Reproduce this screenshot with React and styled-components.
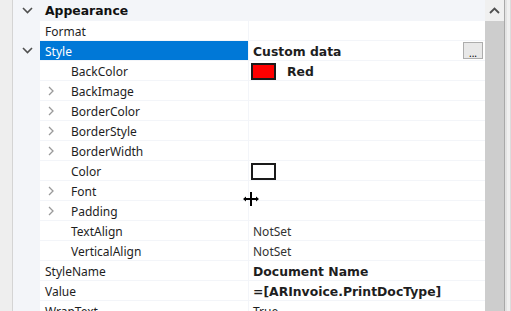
import React from "react";
import styled, {createGlobalStyle} from "styled-components";

const GlobalStyle = createGlobalStyle`
    html, body {
        margin: 0;
        padding: 0;
        background: #f0f0f0;
    }
    body {
        font-family: "Noto Sans", "Open Sans", sans-serif;
        font-size: 12px;
        color: #1e1e1e;
    }
`;

const boldFont = `"DejaVu Sans", "Noto Sans", sans-serif`;

const Frame = styled.div`
    position: relative;
    display: flex;
    width: 511px;
    height: 311px;
    overflow: hidden;
    background: #f0f0f0;
`;

const LeftEdge = styled.div`
    width: 12px;
    flex-shrink: 0;
    background: #eeeeee;
    border-right: 1px solid #d4d4d4;
`;

const Grid = styled.div`
    width: 472px;
    flex-shrink: 0;
    display: flex;
    flex-direction: column;
    background: #f3f5f9;
`;

const CategoryRow = styled.div`
    display: flex;
    align-items: center;
    height: 20px;
    flex-shrink: 0;
    border-bottom: 1px solid #f3f5f9;
`;

const CategoryTitle = styled.span`
    padding-left: 5px;
    padding-top: 1px;
    font-family: ${boldFont};
    font-weight: 700;
    font-size: 12.4px;
    color: #111;
`;

const Row = styled.div`
    display: flex;
    height: 19px;
    flex-shrink: 0;
    border-bottom: 1px solid #f3f5f9;
`;

const Margin = styled.div`
    width: 27px;
    flex-shrink: 0;
    display: flex;
    align-items: center;
    justify-content: center;
    padding-left: 1px;
    box-sizing: border-box;
    background: #f3f5f9;
`;

const NameCell = styled.div`
    width: 209px;
    flex-shrink: 0;
    display: flex;
    align-items: center;
    box-sizing: border-box;
    padding-left: ${p => (p.$sub ? 6 : 5)}px;
    padding-top: 1px;
    background: ${p => (p.$selected ? "#0078d7" : "#ffffff")};
    color: ${p => (p.$selected ? "#ffffff" : "#1e1e1e")};
    border-right: 1px solid #f3f5f9;
    white-space: nowrap;
`;

const Expander = styled.span`
    width: 25px;
    display: inline-flex;
    align-items: center;
    justify-content: flex-start;
    padding-left: 2px;
    box-sizing: border-box;
`;

const ValueCell = styled.div`
    flex: 1;
    display: flex;
    align-items: center;
    padding-left: 4px;
    padding-right: 2px;
    padding-top: 1px;
    background: #ffffff;
    font-family: ${p => (p.$bold ? boldFont : "inherit")};
    font-weight: ${p => (p.$bold ? 700 : 400)};
    font-size: ${p => (p.$bold ? 12.4 : 12)}px;
    white-space: nowrap;
    color: ${p => (p.$muted ? "#333333" : "#1e1e1e")};
`;

const Swatch = styled.span`
    width: 21px;
    height: 13px;
    border: 2px solid #1a1a1a;
    background: ${p => p.$color};
    margin-left: -2px;
    margin-right: ${p => (p.$gap ? 11 : 0)}px;
`;

const EllipsisButton = styled.span`
    margin-left: auto;
    margin-top: -1px;
    width: 18px;
    height: 15px;
    border: 1px solid #adadad;
    background: #e8e8e8;
    display: flex;
    align-items: flex-end;
    justify-content: center;
    font-family: "Noto Sans", sans-serif;
    font-size: 10px;
    line-height: 10px;
    font-weight: 400;
    color: #000;
`;

const Scrollbar = styled.div`
    width: 19px;
    flex-shrink: 0;
    display: flex;
    flex-direction: column;
    background: #f0f0f0;
`;

const ArrowButton = styled.div`
    height: 21px;
    display: flex;
    align-items: center;
    justify-content: center;
`;

const Thumb = styled.div`
    flex: 1;
    background: #cdcdcd;
`;

const RightEdge = styled.div`
    flex: 1;
    border-left: 1px solid #a8a8a8;
    background: linear-gradient(to right, #e3e3e3 0 2px, #f0f0f0 2px 5px, #dcdcdc 5px 6px, #f0f0f0 6px);
`;

const Cursor = styled.svg`
    position: absolute;
    left: 243px;
    top: 192px;
`;

const ChevronDown = () => (
    <svg width="11" height="7" viewBox="0 0 11 7">
        <path d="M1 1 L5.5 5.5 L10 1" fill="none" stroke="#505050" strokeWidth="1.6"/>
    </svg>
);

const ChevronRight = () => (
    <svg width="6" height="10" viewBox="0 0 6 10">
        <path d="M1 1 L5 5 L1 9" fill="none" stroke="#9a9a9a" strokeWidth="1.3"/>
    </svg>
);

const ChevronUp = () => (
    <svg width="11" height="7" viewBox="0 0 11 7">
        <path d="M1 6 L5.5 1.5 L10 6" fill="none" stroke="#505050" strokeWidth="1.8"/>
    </svg>
);

const styleProps = [
    {name: "BackColor", swatch: "#ff0000", value: "Red", bold: true},
    {name: "BackImage", expand: true},
    {name: "BorderColor", expand: true},
    {name: "BorderStyle", expand: true},
    {name: "BorderWidth", expand: true},
    {name: "Color", swatch: "#ffffff"},
    {name: "Font", expand: true},
    {name: "Padding", expand: true},
    {name: "TextAlign", value: "NotSet", muted: true},
    {name: "VerticalAlign", value: "NotSet", muted: true},
];

const afterProps = [
    {name: "StyleName", value: "Document Name", bold: true},
    {name: "Value", value: "=[ARInvoice.PrintDocType]", bold: true},
    {name: "WrapText", value: "True"},
];

const App = () => {
    return (
        <Frame>
            <GlobalStyle/>
            <LeftEdge/>
            <Grid>
                <CategoryRow>
                    <Margin><ChevronDown/></Margin>
                    <CategoryTitle>Appearance</CategoryTitle>
                </CategoryRow>
                <Row>
                    <Margin/>
                    <NameCell>Format</NameCell>
                    <ValueCell/>
                </Row>
                <Row>
                    <Margin><ChevronDown/></Margin>
                    <NameCell $selected>Style</NameCell>
                    <ValueCell $bold>
                        Custom data
                        <EllipsisButton>...</EllipsisButton>
                    </ValueCell>
                </Row>
                {styleProps.map(p => (
                    <Row key={p.name}>
                        <Margin/>
                        <NameCell $sub>
                            <Expander>{p.expand && <ChevronRight/>}</Expander>
                            {p.name}
                        </NameCell>
                        <ValueCell $bold={p.bold} $muted={p.muted}>
                            {p.swatch && <Swatch $color={p.swatch} $gap={!!p.value}/>}
                            {p.value}
                        </ValueCell>
                    </Row>
                ))}
                {afterProps.map(p => (
                    <Row key={p.name}>
                        <Margin/>
                        <NameCell>{p.name}</NameCell>
                        <ValueCell $bold={p.bold}>{p.value}</ValueCell>
                    </Row>
                ))}
            </Grid>
            <Scrollbar>
                <ArrowButton><ChevronUp/></ArrowButton>
                <Thumb/>
            </Scrollbar>
            <RightEdge/>
            <Cursor width="16" height="14" viewBox="0 0 16 14">
                <path d="M8 0 V14 M1 7 H15" stroke="#000" strokeWidth="2"/>
                <path d="M0 7 L3 4.5 V9.5 Z M16 7 L13 4.5 V9.5 Z" fill="#000"/>
            </Cursor>
        </Frame>
    );
};

export default App;
